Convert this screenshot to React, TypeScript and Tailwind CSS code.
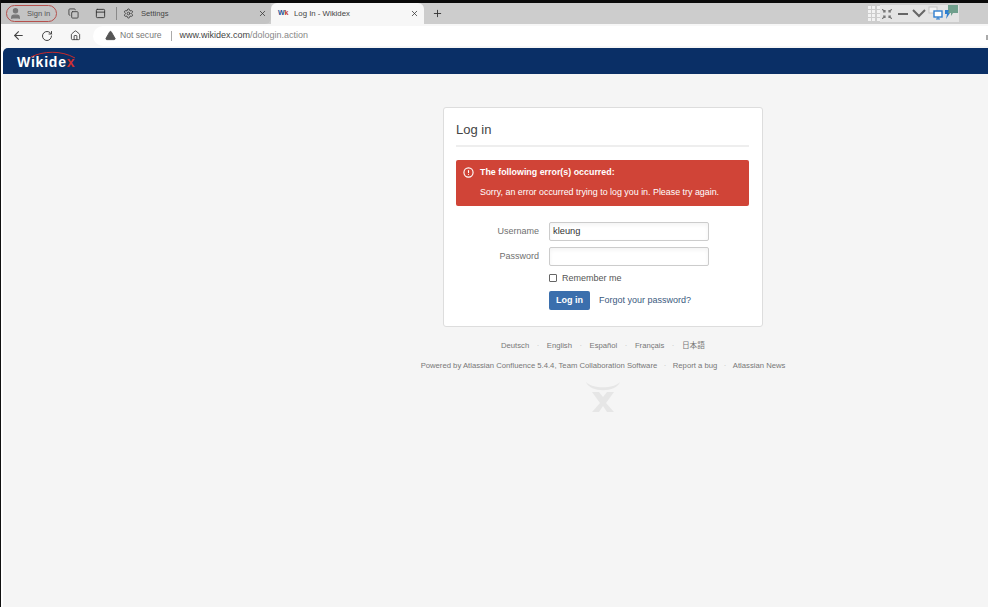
import { ArrowLeft, RotateCw, Home, X, Plus, Settings, TriangleAlert, CircleAlert, Copy, PanelTop, User } from "lucide-react";

const languages = ["Deutsch", "English", "Español", "Français", "日本語"];
const footerLinks = ["Powered by Atlassian Confluence 5.4.4, Team Collaboration Software", "Report a bug", "Atlassian News"];

const TabBar = () => (
  <div className="flex h-[21px] bg-[#cdcdcd] items-stretch relative">
    <div className="flex items-center w-[270px] bg-[#c4c4c4] rounded-br-[6px] pl-[5px]">
      <div className="flex items-center h-[17px] w-[51px] rounded-full border border-[#b5504c] pl-[2px]">
        <User size={13} fill="#777777" stroke="#777777" />
        <span className="text-[7.6px] text-[#555555] ml-[5px]">Sign in</span>
      </div>
      <Copy size={11} className="ml-[11px] text-[#444444]" />
      <PanelTop size={11} className="ml-[16px] text-[#333333]" />
      <div className="w-px h-[13px] bg-[#8a8a8a] ml-[10px]" />
      <Settings size={11} className="ml-[6px] text-[#444444]" />
      <span className="text-[7.6px] text-[#444444] ml-[7px]">Settings</span>
      <X size={9} className="ml-auto mr-[4px] text-[#333333]" />
    </div>
    <div className="flex items-center w-[153px] bg-[#f7f7f7] rounded-t-[6px] pl-[7px] pr-[5px]">
      <span className="text-[7px] font-bold text-[#1f4f96] w-[13px]">W<span className="text-[#c0392b]">k</span></span>
      <span className="text-[7.8px] text-[#444444] ml-[3px]">Log In - Wikidex</span>
      <X size={9} className="ml-auto text-[#333333]" />
    </div>
    <div className="flex items-center pl-[8px]">
      <Plus size={11} className="text-[#333333]" />
    </div>
    <div className="ml-auto mr-[29px] flex items-center h-[17px] mt-[2px] bg-[#e4e4e4] w-[92px]">
      <div className="grid grid-cols-3 gap-[1px] w-[13px] shrink-0 bg-[#cdcdcd] h-[17px] content-center pl-[1px]">
        {Array.from({ length: 12 }).map((_, i) => (
          <div key={i} className="w-[3px] h-[3px] bg-[#f2f2f2]" />
        ))}
      </div>
      <svg width="10" height="10" viewBox="0 0 10 10" className="ml-[2px] shrink-0" fill="none" stroke="#777777" strokeWidth="1.2">
        <path d="M0 0l3 3M3 1v2H1M10 0L7 3M7 1v2h2M0 10l3-3M3 9V7H1M10 10L7 7M7 9V7h2" />
      </svg>
      <div className="w-[10px] h-[2px] bg-[#666666] ml-[6px] mt-[1px] shrink-0" />
      <svg width="14" height="9" viewBox="0 0 14 9" className="ml-[4px] shrink-0" fill="none" stroke="#666666" strokeWidth="2">
        <path d="M1 1l6 6 6-6" />
      </svg>
      <svg width="31" height="17" viewBox="0 0 31 17" className="ml-[2px] shrink-0" fill="none">
        <rect x="1" y="2" width="8" height="6" fill="#f4f4f4" stroke="#c4c4c4" />
        <rect x="6" y="6" width="8" height="6" fill="#ffffff" stroke="#2f7fd0" strokeWidth="1.4" />
        <path d="M8 14h4M10 12v2" stroke="#2f7fd0" strokeWidth="1.2" />
        <path d="M20 0h10v8h-5l-2 3V8h-3z" fill="#6f9f8c" />
        <path d="M17 5h4l-1 3h2l-4 6 1-5h-2z" fill="#2f7fd0" />
      </svg>
    </div>
  </div>
);

const AddressBar = () => (
  <div className="flex items-center h-[23px] bg-[#f7f7f7] pl-[11px]">
    <ArrowLeft size={13} className="text-[#444444]" />
    <RotateCw size={12} className="ml-[16px] text-[#444444]" />
    <Home size={11} className="ml-[17px] text-[#444444]" />
    <div className="flex items-center ml-[12px] pl-[12px] h-[20px] flex-1 bg-white rounded-l-full">
      <TriangleAlert size={11} fill="#555555" stroke="#555555" />
      <span className="text-[8.6px] text-[#777777] ml-[4px]">Not secure</span>
      <div className="w-px h-[10px] bg-[#aaaaaa] ml-[9px]" />
      <span className="text-[9px] text-[#444444] ml-[8px]">
        www.wikidex.com<span className="text-[#888888]">/dologin.action</span>
      </span>
      <div className="ml-auto w-[2px] h-[5px] mt-[4px] bg-[#aaaaaa]" />
    </div>
  </div>
);

const Header = () => (
  <div className="flex items-center h-[26px] mt-[1px] bg-[#0a2f66] pl-[14px] rounded-tl-[5px]">
    <div className="relative mt-[2px]">
      <span className="text-[14px] font-bold text-white tracking-[0.8px]">Wikide<span className="text-[#d03030]">x</span></span>
      <svg width="48" height="8" viewBox="0 0 48 8" className="absolute left-[12px] top-[1px]" fill="none">
        <path d="M2 6C14 0 32 -1 46 7" stroke="#c92a2a" strokeWidth="1" />
      </svg>
    </div>
  </div>
);

const LoginCard = () => (
  <div className="w-[320px] h-[220px] bg-white border border-[#dddddd] rounded-[3px] pl-[12px] pr-[13px] pt-[12px]">
    <h1 className="text-[13px] leading-[20px] text-[#444444] pb-[5px] border-b-2 border-[#eeeeee]">Log in</h1>
    <div className="mt-[13px] h-[46px] bg-[#d04437] rounded-[2px] pl-[7px] pt-[6px] text-white">
      <div className="flex items-center">
        <CircleAlert size={11} strokeWidth={2.5} />
        <span className="text-[8.9px] font-bold ml-[6px]">The following error(s) occurred:</span>
      </div>
      <p className="text-[8.9px] mt-[7px] ml-[17px]">Sorry, an error occurred trying to log you in. Please try again.</p>
    </div>
    <div className="mt-[16px] flex items-center">
      <label className="w-[83px] text-right text-[9px] text-[#707070]">Username</label>
      <div className="ml-[10px] w-[160px] h-[19px] border border-[#cccccc] rounded-[2px] shadow-inner flex items-center pl-[3px] text-[9.3px] text-[#333333]">kleung</div>
    </div>
    <div className="mt-[6px] flex items-center">
      <label className="w-[83px] text-right text-[9px] text-[#707070]">Password</label>
      <div className="ml-[10px] w-[160px] h-[19px] border border-[#cccccc] rounded-[2px] shadow-inner" />
    </div>
    <div className="mt-[5px] ml-[93px] flex items-center h-[14px]">
      <div className="w-[8px] h-[8px] border border-[#666666] rounded-[1px]" />
      <span className="ml-[5px] pt-[1px] text-[9px] text-[#555555]">Remember me</span>
    </div>
    <div className="mt-[6px] ml-[93px] flex items-center">
      <button className="w-[41px] h-[19px] bg-[#3b6fad] rounded-[2px] text-[9px] font-bold text-white">Log in</button>
      <span className="ml-[9px] text-[9px] text-[#3b5a80]">Forgot your password?</span>
    </div>
  </div>
);

const Footer = () => (
  <div className="flex flex-col items-center mt-[13px] text-[7.7px] text-[#777777] whitespace-nowrap">
    <div className="flex items-center h-[12px]">
      {languages.map((lang, i) => (
        <span key={lang} className="flex items-center">
          {i > 0 && <span className="text-[#c4c4c4] mx-[7.5px]">·</span>}
          <span>{lang}</span>
        </span>
      ))}
    </div>
    <div className="flex items-center h-[12px] mt-[8px]">
      {footerLinks.map((link, i) => (
        <span key={link} className="flex items-center">
          {i > 0 && <span className="text-[#c4c4c4] mx-[6.5px]">·</span>}
          <span>{link}</span>
        </span>
      ))}
    </div>
    <svg width="34" height="31" viewBox="0 0 34 31" className="mt-[10px]" fill="none">
      <path d="M0 0C6 7 28 7 34 0C30 11 4 11 0 0z" fill="#e6e6e6" />
      <path d="M6 10h7l4 5 4-5h7l-8 11 8 9h-7l-4-6-4 6H6l8-9z" fill="#e6e6e6" />
    </svg>
  </div>
);

export default function App() {
  return (
    <div className="w-[988px] h-[607px] flex flex-col border-l border-[#111111] bg-white overflow-hidden font-['Liberation_Sans','Noto_Sans_CJK_JP',sans-serif]">
      <div className="h-[3px] bg-[#0a0a0a] shrink-0" />
      <TabBar />
      <AddressBar />
      <div className="flex-1 ml-[2px] flex flex-col bg-[#f5f5f5]">
        <Header />
        <div className="flex flex-col items-center ml-[400px] w-[400px] mt-[33px]">
          <LoginCard />
          <Footer />
        </div>
      </div>
    </div>
  );
}
